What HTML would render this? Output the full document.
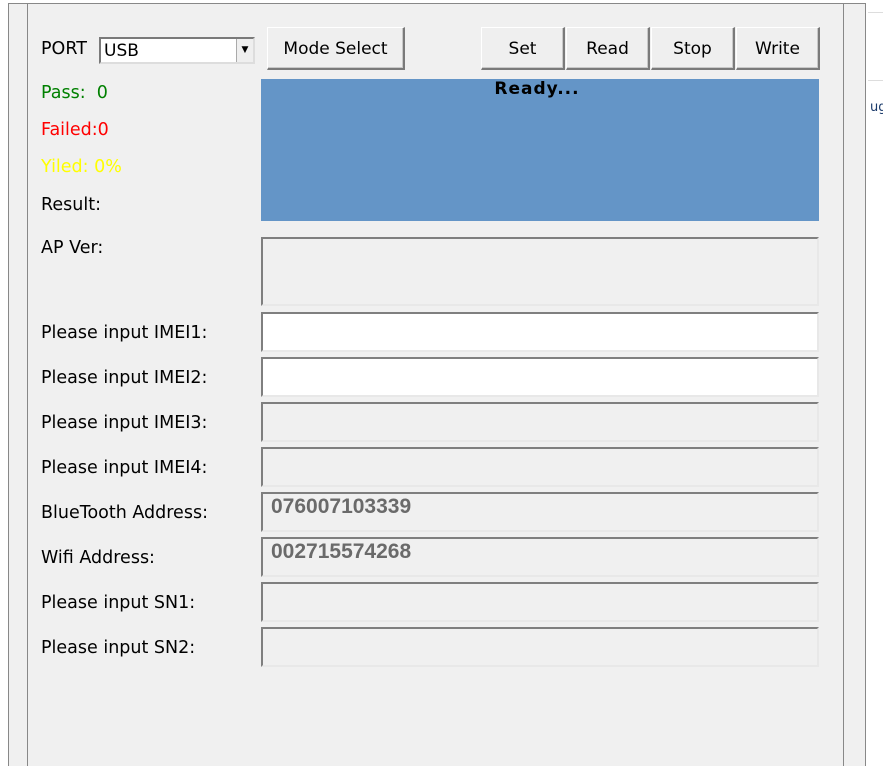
<!DOCTYPE html>
<html><head><style>
html,body{margin:0;width:883px;height:766px;overflow:hidden}
body{background:#fff;position:relative;font-family:"DejaVu Sans","Liberation Sans",sans-serif;font-size:17.5px;color:#000}
.a{position:absolute}
.win{left:8px;top:3px;width:858px;height:763px;background:#f0f0f0;border:1px solid #888;border-bottom:none;box-sizing:border-box}
.btn{position:absolute;background:#efefef;border:1px solid #fff;border-right:2px solid #7a7a7a;border-bottom:2px solid #7a7a7a;box-shadow:inset -1px -1px 0 #c8c8c8;box-sizing:border-box;text-align:center;line-height:42px;height:43px;top:27px;font-size:17px}
.box{position:absolute;left:261px;width:558px;border:2px solid #7f7f7f;border-right-color:#e8e8e8;border-bottom-color:#e8e8e8;box-sizing:border-box;background:#f0f0f0}
.lbl{position:absolute;left:41px}
.num{font-family:"Liberation Sans",sans-serif;font-weight:bold;font-size:21px;color:#6a6a6a;padding:1px 0 0 8px}
</style></head><body>
<div class="a win"></div>
<div class="a" style="left:27px;top:3px;width:1px;height:763px;background:#888"></div>
<div class="a" style="left:843px;top:3px;width:1px;height:763px;background:#888"></div>
<div class="a" style="left:867px;top:0;width:16px;height:766px;background:#fff"></div>
<div class="a" style="left:868px;top:12px;width:15px;height:1px;background:#ddd"></div>
<div class="a" style="left:868px;top:80px;width:15px;height:1px;background:#ddd"></div>
<div class="a" style="left:870px;top:100px;font-size:13px;color:#1a3a6a">ug</div>

<div class="lbl" style="top:39px">PORT</div>
<div class="a" style="left:99px;top:37px;width:156px;height:27px;background:#fff;border:2px solid #7a7a7a;border-right-color:#ddd;border-bottom-color:#ddd;box-sizing:border-box"><span style="position:absolute;left:3px;top:2px;font-size:17px">USB</span><div style="position:absolute;right:0;top:0;width:16px;height:23px;background:#efefef;border-left:1px solid #aaa;font-size:9px;text-align:center;line-height:23px">▼</div></div>

<div class="btn" style="left:267px;width:138px">Mode Select</div>
<div class="btn" style="left:481px;width:84px">Set</div>
<div class="btn" style="left:566px;width:84px">Read</div>
<div class="btn" style="left:651px;width:84px">Stop</div>
<div class="btn" style="left:736px;width:84px">Write</div>

<div class="lbl" style="top:83px;color:#008000">Pass:&nbsp; 0</div>
<div class="lbl" style="top:120px;color:#f00">Failed:0</div>
<div class="lbl" style="top:157px;color:#ffff00">Yiled: 0%</div>
<div class="lbl" style="top:195px">Result:</div>
<div class="a" style="left:261px;top:79px;width:558px;height:142px;background:#6495c7"></div>
<div class="a" style="left:258px;top:79px;width:558px;text-align:center;font-weight:bold;font-size:17px;letter-spacing:1px">Ready...</div>

<div class="lbl" style="top:238px">AP Ver:</div>
<div class="box" style="top:237px;height:69px"></div>
<div class="lbl" style="top:323px">Please input IMEI1:</div>
<div class="box" style="top:312px;height:40px;background:#fff"></div>
<div class="lbl" style="top:368px">Please input IMEI2:</div>
<div class="box" style="top:357px;height:40px;background:#fff"></div>
<div class="lbl" style="top:413px">Please input IMEI3:</div>
<div class="box" style="top:402px;height:40px"></div>
<div class="lbl" style="top:458px">Please input IMEI4:</div>
<div class="box" style="top:447px;height:40px"></div>
<div class="lbl" style="top:503px">BlueTooth Address:</div>
<div class="box num" style="top:492px;height:40px">076007103339</div>
<div class="lbl" style="top:548px">Wifi Address:</div>
<div class="box num" style="top:537px;height:40px">002715574268</div>
<div class="lbl" style="top:593px">Please input SN1:</div>
<div class="box" style="top:582px;height:40px"></div>
<div class="lbl" style="top:638px">Please input SN2:</div>
<div class="box" style="top:627px;height:40px"></div>
</body></html>
